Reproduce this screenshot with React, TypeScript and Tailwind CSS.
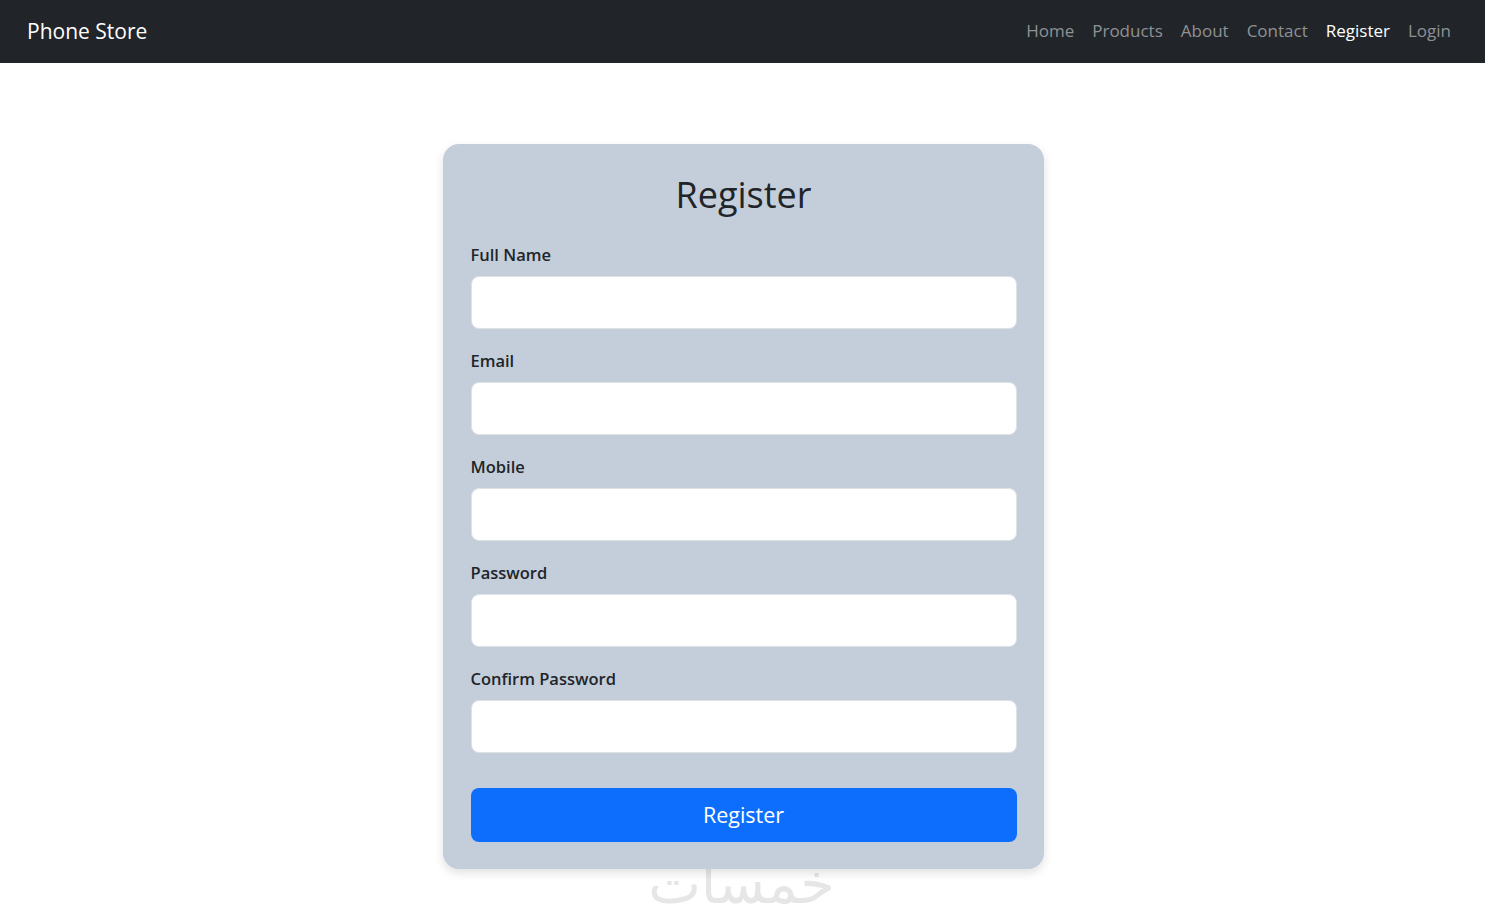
import React from "react";

const fields = ["Full Name", "Email", "Mobile", "Password", "Confirm Password"];

export default function App() {
  return (
    <div className="min-h-[920px] bg-white font-['Open_Sans',sans-serif] text-[#212529]">
      <nav className="h-[63px] bg-[#212529] flex items-center justify-between pl-[27px] pr-[25px]">
        <a className="text-white text-[21px]">Phone Store</a>
        <ul className="flex items-center text-[17px] -translate-y-[1px]">
          {["Home", "Products", "About", "Contact", "Register", "Login"].map((l) => (
            <li key={l}>
              <a
                className={
                  "px-[9px] " +
                  (l === "Register" ? "text-white" : "text-[#8f9194]")
                }
              >
                {l}
              </a>
            </li>
          ))}
        </ul>
      </nav>
      <main className="relative pt-[81px] pl-[1px]">
        <div className="relative z-10 mx-auto flex w-[601px] flex-col rounded-2xl bg-[#c4cedb] pl-[28px] pr-[27px] pt-[28px] pb-[27px] shadow-[0_4px_10px_rgba(0,0,0,0.12)]">
          <h2 className="text-center text-[36px] leading-[46px] font-medium mb-[24px]">Register</h2>
          {fields.map((f) => (
            <div key={f} className="mb-[19px]">
              <label className="block text-[16.5px] leading-[26px] font-semibold mb-[8px]">{f}</label>
              <input
                type={f.includes("Password") ? "password" : "text"}
                className="block w-[546px] h-[53px] rounded-lg border border-[#dee2e6] bg-white px-4 outline-none"
              />
            </div>
          ))}
          <button className="mt-[16px] block w-[546px] h-[54px] rounded-lg bg-[#0d6efd] text-white text-[21.5px]">
            Register
          </button>
        </div>
        <div className="absolute left-0 right-0 top-[793px] flex justify-center pointer-events-none">
          <span className="font-['DejaVu_Sans',sans-serif] text-[56px] leading-none text-[#e6e6e6] translate-x-[-1px]">خمسات</span>
        </div>
      </main>
    </div>
  );
}
